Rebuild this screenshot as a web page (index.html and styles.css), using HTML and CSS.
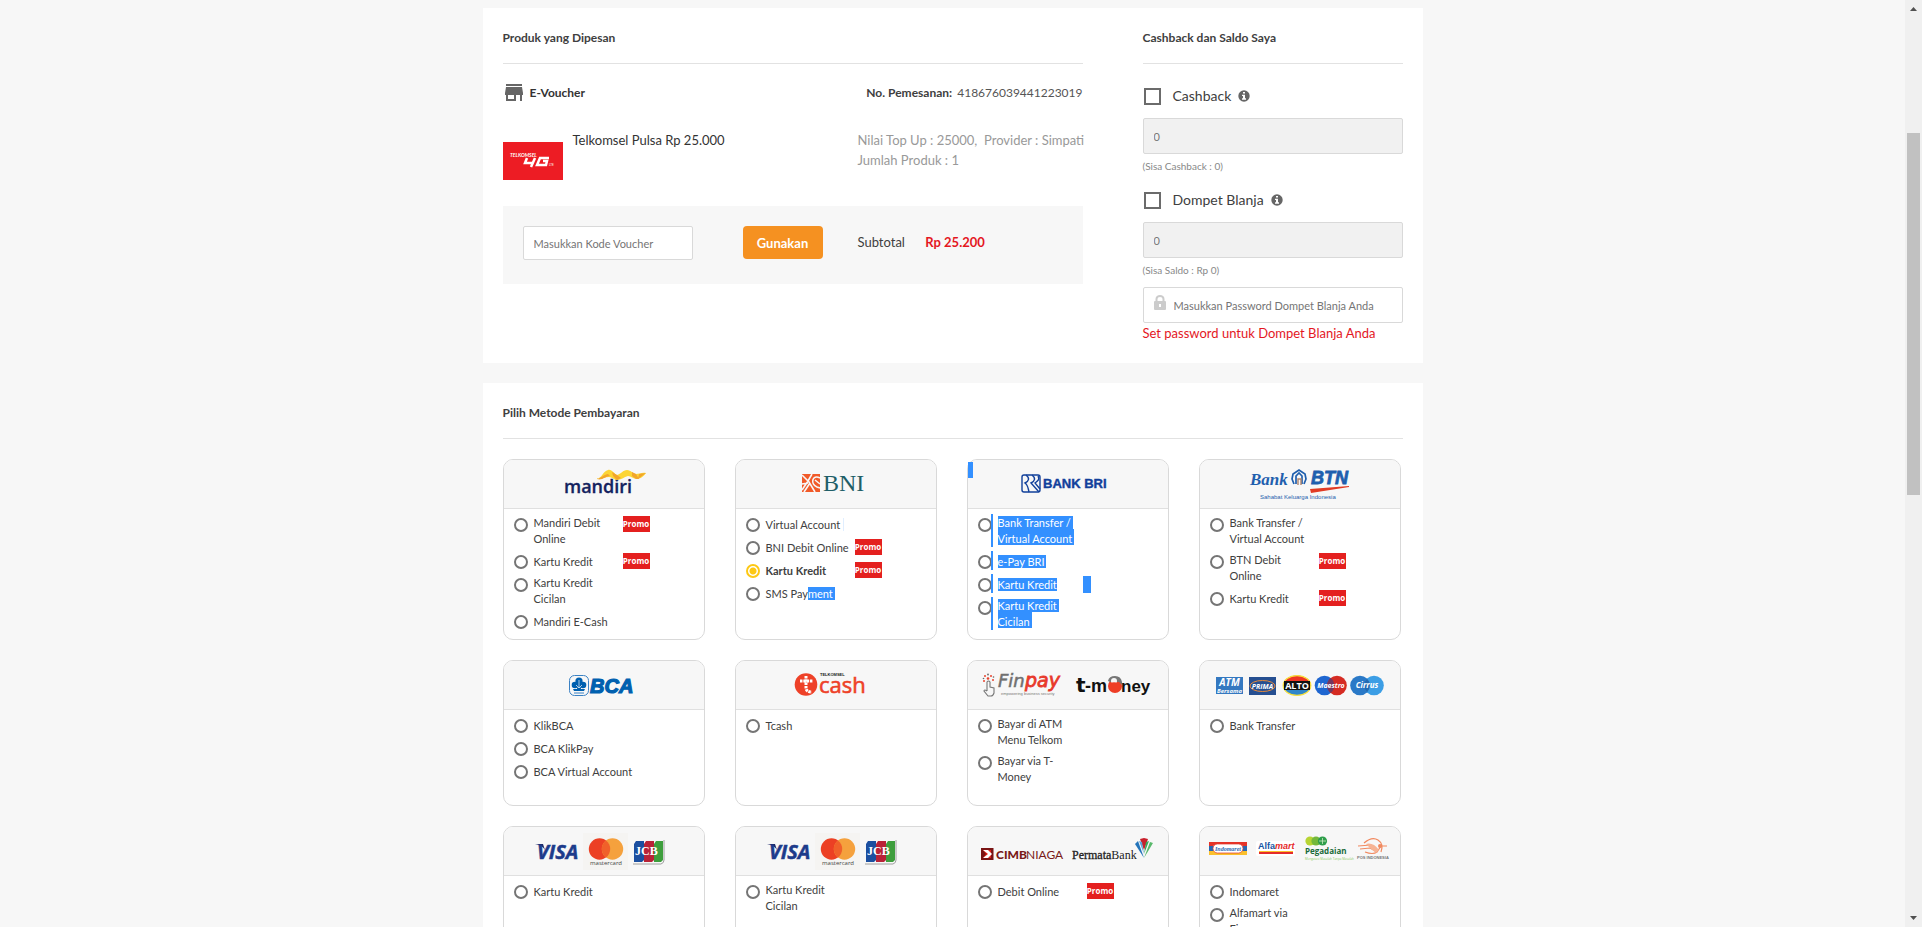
FILE: index.html
```html
<!DOCTYPE html>
<html lang="id">
<head>
<meta charset="utf-8">
<title>Pembayaran</title>
<link rel="stylesheet" href="styles.css">
</head>
<body>
<div class="viewport">
<main class="page">
  <section class="panel order">
    <div class="order-main">
      <h2 class="heading">Produk yang Dipesan</h2>
      <div class="order-head">
        <svg class="store" width="20" height="20" viewBox="0 0 20 20" aria-hidden="true"><path fill="#666" d="M2 1h16v2H2zM2 4h16l1 6v2h-1v6h-2v-6h-4v6H2v-6H1v-2zM4 12v4h6v-4z"/></svg>
        <strong>E-Voucher</strong>
        <p class="order-no"><strong>No. Pemesanan:</strong> <span>418676039441223019</span></p>
      </div>
      <div class="product">
        <svg class="product-pic" width="60" height="38" viewBox="0 0 60 38"><rect width="60" height="38" fill="#ed1c24"/><text x="7" y="15" font-size="5" font-weight="bold" font-style="italic" fill="#fff">TELKOMSEL</text><path d="M24 16l-2 5h8M32 16l-4 9M46 16H37l-3 7h9l1-4h-4" fill="none" stroke="#fff" stroke-width="2.500"/><text x="46" y="24" font-size="3" fill="#fff">LTE</text></svg>
        <p class="product-name">Telkomsel Pulsa Rp 25.000</p>
        <p class="product-meta">Nilai Top Up : 25000,&nbsp; Provider : Simpati<br>Jumlah Produk : 1</p>
      </div>
      <form class="voucher">
        <input class="field voucher-code" type="text" placeholder="Masukkan Kode Voucher" aria-label="Kode voucher">
        <button class="apply" type="button">Gunakan</button>
        <p class="subtotal">Subtotal <strong>Rp 25.200</strong></p>
      </form>
    </div>
    <div class="wallet">
      <h2 class="heading">Cashback dan Saldo Saya</h2>
      <div class="check"><input type="checkbox" id="cashback"><label for="cashback">Cashback</label>
        <svg width="12" height="12" viewBox="0 0 12 12" aria-hidden="true"><circle cx="6" cy="6" r="5.700" fill="#666"/><path fill="#fff" d="M5 2h2v1.600H5zM4 4.700h3v3.600h1v1.500H4V8.300h1V6.100H4z"/></svg></div>
      <input class="field wide" type="text" value="0" disabled aria-label="Jumlah cashback">
      <p class="note">(Sisa Cashback : 0)</p>
      <div class="check second"><input type="checkbox" id="dompet"><label for="dompet">Dompet Blanja</label>
        <svg width="12" height="12" viewBox="0 0 12 12" aria-hidden="true"><circle cx="6" cy="6" r="5.700" fill="#666"/><path fill="#fff" d="M5 2h2v1.600H5zM4 4.700h3v3.600h1v1.500H4V8.300h1V6.100H4z"/></svg></div>
      <input class="field wide" type="text" value="0" disabled aria-label="Jumlah saldo">
      <p class="note">(Sisa Saldo : Rp 0)</p>
      <div class="password">
        <svg width="12" height="15" viewBox="0 0 12 15" aria-hidden="true"><path d="M2.500 7V4a3.500 3 0 0 1 7 0v3" fill="none" stroke="#ccc" stroke-width="2"/><rect y="6" width="12" height="9" rx="1" fill="#ccc"/><path d="M5 9h2v3H5z" fill="#fff"/></svg>
        <input type="password" placeholder="Masukkan Password Dompet Blanja Anda" aria-label="Password Dompet Blanja">
      </div>
      <a class="set-link" href="#">Set password untuk Dompet Blanja Anda</a>
    </div>
  </section>

  <section class="panel">
    <h2 class="heading">Pilih Metode Pembayaran</h2>
    <div class="methods">

      <article class="method">
        <header><svg class="logo" width="200" height="48" viewBox="0 0 200 48">
          <text x="60" y="33" font-family="Open Sans" font-size="18" font-weight="600" fill="#14235f" stroke="#14235f" stroke-width=".3">mandiri</text>
          <path d="M93 19c5-1 6-8 11-9 4-1 6 4 9 5 4-1 6-5 10-5s6 4 9 4 6-2 10-1c-2 3-6 6-9 6-4 0-6-3-9-3-4 1-7 4-11 4-3 0-5-3-8-3-5 0-8 3-12 1z" fill="#fcd535"/>
          <path d="M93 19c4-1 8-5 11-5l2 2c-4 0-8 5-13 3zM108 12l5 3 4 3-4 2-4-4zM128 12l4 2 3 5-3 0-4-3zM135 14l7-1-8 6z" fill="#f2a52c"/>
        </svg></header>
        <ul>
          <li><input type="radio" name="pay" id="m1"><label for="m1">Mandiri Debit<br>Online</label><span class="promo">Promo</span></li>
          <li class="one"><input type="radio" name="pay" id="m2"><label for="m2">Kartu Kredit</label><span class="promo">Promo</span></li>
          <li><input type="radio" name="pay" id="m3"><label for="m3">Kartu Kredit<br>Cicilan</label></li>
          <li class="one"><input type="radio" name="pay" id="m4"><label for="m4">Mandiri E-Cash</label></li>
        </ul>
      </article>

      <article class="method">
        <header><svg class="logo" width="200" height="48" viewBox="0 0 200 48">
          <rect x="66" y="14" width="18" height="18" fill="#f15a29"/>
          <path d="M66 15l7 7 6 10M66 30l6-9 4-7M84 18c-8-4-10 6-3 9l3 1M79 20l5 4M74 23l-6 9M66 24l6-1" fill="none" stroke="#f7f7f7" stroke-width="1.600"/>
          <text x="87" y="31" font-family="Liberation Serif" font-size="24" fill="#1f5f68">BNI</text>
        </svg></header>
        <ul>
          <li class="one"><input type="radio" name="pay" id="n1"><label for="n1"><span class="edge">Virtual Account</span></label></li>
          <li class="one"><input type="radio" name="pay" id="n2"><label for="n2">BNI Debit Online</label><span class="promo">Promo</span></li>
          <li class="one"><input type="radio" name="pay" id="n3" checked><label for="n3">Kartu Kredit</label><span class="promo">Promo</span></li>
          <li class="one"><input type="radio" name="pay" id="n4"><label for="n4">SMS Pay<span class="sel">ment</span></label></li>
        </ul>
      </article>

      <article class="method marked">
        <header><svg class="logo" width="200" height="48" viewBox="0 0 200 48">
          <g fill="none" stroke="#12409b" stroke-width="1.400"><rect x="54" y="15" width="18" height="17" rx="2"/><path d="M58 15c4 3 3 6-1 8 3 2 3 5 4 9M64 15c4 3 3 6-1 8l8 9M70 16c2 3 0 5-3 7l5 6"/></g>
          <text x="75" y="28" font-family="Liberation Sans" font-size="13" font-weight="bold" fill="#12409b" stroke="#12409b" stroke-width=".4">BANK BRI</text>
        </svg></header>
        <ul>
          <li><input type="radio" name="pay" id="r1"><label for="r1"><span class="sel">Bank Transfer /</span><br><span class="sel next">Virtual Account</span></label></li>
          <li class="one"><input type="radio" name="pay" id="r2"><label for="r2"><span class="sel">e-Pay BRI</span></label></li>
          <li class="one"><input type="radio" name="pay" id="r3"><label for="r3"><span class="sel flush">Kartu Kredit</span></label><span class="sel-block"></span></li>
          <li><input type="radio" name="pay" id="r4"><label for="r4"><span class="sel">Kartu Kredit</span><br><span class="sel next">Cicilan</span></label></li>
        </ul>
      </article>

      <article class="method">
        <header><svg class="logo" width="200" height="48" viewBox="0 0 200 48">
          <text x="50" y="25" font-family="Liberation Serif" font-size="17" font-weight="bold" font-style="italic" fill="#1f5fae">Bank</text>
          <path d="M94 24l-2-5 1-5 6-4 6 4 1 5-2 5M96 24v-8l3-3 3 3v8" fill="none" stroke="#1f5fae" stroke-width="1.700"/><path d="M98 25v-6h3v6" fill="none" stroke="#b0846a" stroke-width="1.400"/>
          <text x="111" y="24" font-family="Liberation Sans" font-size="18" font-weight="bold" font-style="italic" fill="#1f5fae" stroke="#1f5fae" stroke-width=".8">BTN</text>
          <path d="M110 29l39-3v1l-38 6z" fill="#e23b24"/>
          <text x="60" y="39" font-family="Liberation Sans" font-size="6" fill="#1f5fae">Sahabat Keluarga Indonesia</text>
        </svg></header>
        <ul>
          <li><input type="radio" name="pay" id="t1"><label for="t1">Bank Transfer /<br>Virtual Account</label></li>
          <li><input type="radio" name="pay" id="t2"><label for="t2">BTN Debit<br>Online</label><span class="promo">Promo</span></li>
          <li class="one"><input type="radio" name="pay" id="t3"><label for="t3">Kartu Kredit</label><span class="promo">Promo</span></li>
        </ul>
      </article>

      <article class="method">
        <header><svg class="logo" width="200" height="48" viewBox="0 0 200 48">
          <rect x="65.500" y="14.500" width="19" height="20" rx="5" fill="none" stroke="#3b82c4"/>
          <g fill="#0060af"><circle cx="75" cy="20" r="3.600"/><circle cx="71" cy="24" r="3.300"/><circle cx="79" cy="24" r="3.300"/><path d="M74 22h2l1 6h4l-1 2H70l-1-2h4z"/></g>
          <path d="M75 19v8M72 24l3 3 3-3" stroke="#f7f7f7" stroke-width=".7" fill="none"/><path d="M70 32h10" stroke="#3b82c4"/>
          <text x="86" y="32" font-family="Liberation Sans" font-size="20" font-weight="bold" font-style="italic" fill="#0060af" stroke="#0060af" stroke-width="1.200">BCA</text>
        </svg></header>
        <ul>
          <li class="one"><input type="radio" name="pay" id="c1"><label for="c1">KlikBCA</label></li>
          <li class="one"><input type="radio" name="pay" id="c2"><label for="c2">BCA KlikPay</label></li>
          <li class="one"><input type="radio" name="pay" id="c3"><label for="c3">BCA Virtual Account</label></li>
        </ul>
      </article>

      <article class="method">
        <header><svg class="logo" width="200" height="48" viewBox="0 0 200 48">
          <circle cx="70" cy="23.500" r="11.300" fill="#ee4128"/>
          <path d="M70 15v12q0 4 6 4M64 20h13" fill="none" stroke="#fff" stroke-width="3" stroke-dasharray="2.500 .8"/>
          <text x="83" y="32" font-family="Open Sans" font-size="22" font-weight="500" fill="#ee4128" stroke="#ee4128" stroke-width=".6">cash</text>
          <text x="84" y="15" font-family="Liberation Sans" font-size="4" font-weight="bold" fill="#222">TELKOMSEL</text>
        </svg></header>
        <ul><li class="one"><input type="radio" name="pay" id="k1"><label for="k1">Tcash</label></li></ul>
      </article>

      <article class="method">
        <header><svg class="logo" width="200" height="48" viewBox="0 0 200 48">
          <g fill="none" stroke="#777" stroke-width="1.100"><path d="M19 30v-9q1.500-2 3 0v5l4 1v5q-1 3-3 3h-3l-4-5q0-2 3 0"/></g>
          <g fill="#e8432e"><circle cx="20" cy="17.500" r="1.300"/><circle cx="17" cy="15" r="1"/><circle cx="23" cy="15" r="1"/><circle cx="25" cy="19" r="1"/><circle cx="16" cy="20" r="1"/></g><g fill="#666"><circle cx="20" cy="13.500" r=".9"/><circle cx="25.500" cy="16" r=".8"/><circle cx="15.500" cy="17.500" r=".8"/></g>
          <text x="30" y="26" font-family="DejaVu Sans" font-size="18" font-style="italic" fill="#707070" stroke="#707070" stroke-width=".5">Fin</text><text x="57" y="26" font-family="DejaVu Sans" font-size="19" font-style="italic" fill="#e8392b" stroke="#e8392b" stroke-width=".8">pay</text>
          <text x="33" y="34" font-family="Liberation Sans" font-size="4" fill="#777">empowering business security</text>
          <text x="108" y="31" font-family="DejaVu Sans" font-size="20" font-weight="bold" fill="#111">t</text>
          <text x="117" y="31" font-family="Liberation Sans" font-size="18" font-weight="bold" fill="#111">-m</text>
          <circle cx="147" cy="25" r="7" fill="#ee3e26"/><path d="M140 20q1-5 7-5t7 6v3l-3-3h-9z" fill="#777"/>
          <circle cx="146" cy="20" r="3" fill="#f7f7f7"/><path d="M142 22q4-1.500 8 0v3h-8z" fill="#ee3e26"/>
          <text x="153" y="31" font-family="Liberation Sans" font-size="17" font-weight="bold" fill="#111">ney</text>
        </svg></header>
        <ul>
          <li><input type="radio" name="pay" id="f1"><label for="f1">Bayar di ATM<br>Menu Telkom</label></li>
          <li><input type="radio" name="pay" id="f2"><label for="f2">Bayar via T-<br>Money</label></li>
        </ul>
      </article>

      <article class="method">
        <header><svg class="logo" width="200" height="48" viewBox="0 0 200 48" font-family="Open Sans" font-weight="bold" font-style="italic" fill="#fff" text-anchor="middle">
          <rect x="16" y="16" width="27" height="17" fill="#3478c0"/><text x="29.500" y="25" font-size="10">ATM</text><text x="29.500" y="32" font-size="6">Bersama</text>
          <rect x="49" y="16" width="27" height="18" fill="#264f91"/><ellipse cx="62.500" cy="25" rx="12.500" ry="5.500" fill="none" stroke="#e98b3a"/><text x="62.500" y="28" font-size="7">PRIMA</text>
          <ellipse cx="97" cy="24.500" rx="14" ry="10" fill="#2f86ca"/><path d="M83 24.500a14 10 0 0 1 28 0z" fill="#ee3524"/><ellipse cx="97" cy="24.500" rx="13.800" ry="9.800" fill="none" stroke="#fbe13a" stroke-width="1.200"/><rect x="84" y="20" width="26" height="9" fill="#111"/><text x="97" y="28" font-size="9" font-style="normal">ALTO</text>
          <circle cx="124.500" cy="24.500" r="9.800" fill="#1f66d0"/><circle cx="137" cy="24.500" r="9.800" fill="#d52b22"/><path d="M130.700 17a9.800 9.800 0 0 1 0 15 9.800 9.800 0 0 1 0-15" fill="#73375f"/><text x="131" y="27" font-size="7">Maestro</text>
          <circle cx="160" cy="24.500" r="9.800" fill="#2a79c7"/><circle cx="174" cy="24.500" r="9.800" fill="#3c9ee5"/><path d="M167 17.600a9.800 9.800 0 0 1 0 13.800 9.800 9.800 0 0 1 0-13.800" fill="#2569b0"/><text x="167" y="27" font-size="8">Cirrus</text>
        </svg></header>
        <ul><li class="one"><input type="radio" name="pay" id="a1"><label for="a1">Bank Transfer</label></li></ul>
      </article>

      <article class="method">
        <header><svg class="logo" width="200" height="48" viewBox="0 0 200 48">
          <path d="M31 17h8l2 6q-3-5-10-6z" fill="#1f2a6b"/><text x="33" y="32" font-family="Open Sans" font-size="20" font-weight="bold" font-style="italic" fill="#1d3b8b" stroke="#1d3b8b" stroke-width=".5">VISA</text>
          <rect x="79" y="6" width="45" height="37" fill="#f5f4f2"/><circle cx="95.500" cy="22" r="10.700" fill="#ec4024"/><circle cx="108.500" cy="22" r="10.700" fill="#f5a13d"/><path d="M102 13.500a10.700 10.700 0 0 1 0 17 10.700 10.700 0 0 1 0-17" fill="#f0602a"/><text x="86" y="38" font-family="Open Sans" font-size="6" fill="#444">mastercard</text>
          <path d="M132 14h8v19l-2 2h-8V17z" fill="#1c4fa0"/><path d="M142 14h8v19l-2 2h-8V17z" fill="#b92237"/><path d="M152 14h7v19l-2 2h-7V17z" fill="#3e9e3d"/><path d="M129 37h28q3-1 3-4V13" fill="none" stroke="#888" stroke-width=".8"/><text x="131" y="28" font-family="Liberation Serif" font-size="12" font-weight="bold" fill="#fff">JCB</text>
        </svg></header>
        <ul><li class="one"><input type="radio" name="pay" id="v1"><label for="v1">Kartu Kredit</label></li></ul>
      </article>

      <article class="method">
        <header><svg class="logo" width="200" height="48" viewBox="0 0 200 48">
          <path d="M31 17h8l2 6q-3-5-10-6z" fill="#1f2a6b"/><text x="33" y="32" font-family="Open Sans" font-size="20" font-weight="bold" font-style="italic" fill="#1d3b8b" stroke="#1d3b8b" stroke-width=".5">VISA</text>
          <rect x="79" y="6" width="45" height="37" fill="#f5f4f2"/><circle cx="95.500" cy="22" r="10.700" fill="#ec4024"/><circle cx="108.500" cy="22" r="10.700" fill="#f5a13d"/><path d="M102 13.500a10.700 10.700 0 0 1 0 17 10.700 10.700 0 0 1 0-17" fill="#f0602a"/><text x="86" y="38" font-family="Open Sans" font-size="6" fill="#444">mastercard</text>
          <path d="M132 14h8v19l-2 2h-8V17z" fill="#1c4fa0"/><path d="M142 14h8v19l-2 2h-8V17z" fill="#b92237"/><path d="M152 14h7v19l-2 2h-7V17z" fill="#3e9e3d"/><path d="M129 37h28q3-1 3-4V13" fill="none" stroke="#888" stroke-width=".8"/><text x="131" y="28" font-family="Liberation Serif" font-size="12" font-weight="bold" fill="#fff">JCB</text>
        </svg></header>
        <ul><li><input type="radio" name="pay" id="w1"><label for="w1">Kartu Kredit<br>Cicilan</label></li></ul>
      </article>

      <article class="method">
        <header><svg class="logo" width="200" height="48" viewBox="0 0 200 48">
          <rect x="13" y="21" width="12.500" height="12" fill="#7a1414"/><path d="M15 23h8v8h-8l3-4z" fill="#e2231a"/><path d="M15 23h5l4 4-4 4h-5l5-4z" fill="#fff"/>
          <text x="28" y="32" font-family="Lato" font-size="12" font-weight="900" fill="#7a1a18">CIMB</text><text x="58" y="32" font-family="Lato" font-size="12" fill="#7a1a18">NIAGA</text>
          <text x="104" y="32" font-family="Liberation Serif" font-size="12" fill="#222"><tspan stroke="#222" stroke-width=".3">Permata</tspan>Bank</text>
          <path d="M172 12l4-1 4 1-4 11z" fill="#c8202c"/><path d="M167 17l3-3 6 17z" fill="#2374ba"/><path d="M171 14l3 1 2 12z" fill="#5fa6da"/><path d="M181 14l-3 1-2 12z" fill="#3aa559"/><path d="M185 16l-3-1-6 16z" fill="#59b96b"/>
        </svg></header>
        <ul><li class="one"><input type="radio" name="pay" id="p1"><label for="p1">Debit Online</label><span class="promo">Promo</span></li></ul>
      </article>

      <article class="method">
        <header><svg class="logo" width="200" height="48" viewBox="0 0 200 48">
          <rect x="9" y="15" width="38" height="4" fill="#e53327"/><rect x="9" y="19" width="38" height="5" fill="#2768b2"/><rect x="9" y="24" width="38" height="4" fill="#fbc02d"/><rect x="13" y="17" width="30" height="9" rx="4.500" fill="#fff" stroke="#e53327" stroke-width=".7"/><text x="28" y="24" text-anchor="middle" font-family="Liberation Serif" font-size="6" font-weight="bold" font-style="italic" fill="#2768b2">Indomaret</text>
          <rect x="56" y="14" width="39" height="15" rx="2" fill="#fff"/><text x="58" y="22" font-family="Liberation Sans" font-size="9" font-weight="bold" fill="#1555a5">Alfa<tspan fill="#e52b2b" font-style="italic">mart</tspan></text><path d="M59 24h34v1H59z" fill="#fbc02d"/><path d="M59 25h34v2H59z" fill="#e52b2b"/>
          <circle cx="110" cy="14" r="4.600" fill="#b7d433"/><circle cx="116" cy="14" r="4.600" fill="#74b83b"/><circle cx="122.500" cy="14" r="4.600" fill="#2e9e4b"/><path d="M119 14h7M122.500 11v6" stroke="#cde8c0" stroke-width=".8"/>
          <text x="105" y="27" font-family="Open Sans" font-size="8" font-weight="bold" fill="#176b3a">Pegadaian</text><text x="105" y="33" font-family="Open Sans" font-size="3" fill="#8ccc62">Mengatasi Masalah Tanpa Masalah</text>
          <g fill="none" stroke="#f1895f" stroke-width="1.200"><path d="M164 16q8-7 14-3t3 12M165 25q8 3 12 0l4-6h6M158 19l13-1 6 6M160 22l10-1 7 4"/></g><path d="M166 17q7-2 13 6l-3 3-6-5z" fill="#f6b394"/><circle cx="180" cy="19" r="2" fill="#f1895f"/>
          <text x="157" y="32" font-family="Liberation Sans" font-size="4" font-weight="bold" fill="#777">POS INDONESIA</text>
        </svg></header>
        <ul>
          <li class="one"><input type="radio" name="pay" id="i1"><label for="i1">Indomaret</label></li>
          <li><input type="radio" name="pay" id="i2"><label for="i2">Alfamart via<br>Finpay</label></li>
        </ul>
      </article>
    </div>
  </section>
</main>
<div class="scrollbar" aria-hidden="true">
  <svg width="7" height="4" viewBox="0 0 7 4"><path d="M0 4l3.500-4L7 4z" fill="#505050"/></svg>
  <div class="track"><div class="thumb"></div></div>
  <svg width="7" height="4" viewBox="0 0 7 4"><path d="M0 0l3.500 4L7 0z" fill="#505050"/></svg>
</div>
</div>
</body>
</html>
```

FILE: styles.css
```css
* { box-sizing: border-box; }
body { margin: 0; background: #f7f7f7; color: #404040; font-family: Lato, "Open Sans", sans-serif; font-size: 13px; line-height: 20px; }
p, ul, h2 { margin: 0; padding: 0; }
ul { list-style: none; }
svg { flex: none; display: block; }
input, button { font-family: inherit; }

.viewport { display: flex; height: 100vh; overflow: hidden; }
.page { flex: 1; padding: 8px 16px 0; overflow: hidden; }
.panel { max-width: 940px; margin: 0 auto 20px; padding: 20px; background: #fff; }
.heading { padding-bottom: 15px; border-bottom: 1px solid #e2e2e2; font-size: 12px; line-height: 20px; font-weight: 700; }

/* Order summary */
.order { display: grid; grid-template-columns: minmax(0, 1fr) 260px; gap: 60px; }
.order-head { display: flex; align-items: center; gap: 6px; margin-top: 19px; font-size: 12px; color: #333; }
.store { margin-left: 1px; }
.order-no { margin-left: auto; color: #555; }
.order-no strong { color: #404040; margin-right: 2px; }
.order-no span { font-size: 12px; }
.product { display: grid; grid-template-columns: 60px 1fr 225px; column-gap: 10px; margin-top: 27px; }
.product-pic { margin-top: 12px; }
.product-name { color: #333; }
.product-meta { color: #999; white-space: nowrap; }
.voucher { display: flex; align-items: flex-start; margin-top: 26px; padding: 20px 20px 24px; background: #f7f7f7; }
.field { height: 34px; padding: 0 10px; border: 1px solid #d9d9d9; border-radius: 2px; background: #fff; color: #777; font-size: 11px; }
.field::placeholder, .password input::placeholder { color: #757575; opacity: 1; }
.voucher-code { width: 170px; margin-right: 50px; }
.apply { width: 80px; height: 33px; margin-right: 35px; padding: 0; border: 0; border-radius: 4px; background: #f59121; color: #fff; font-size: 13px; font-weight: 700; }
.subtotal { line-height: 33px; }
.subtotal strong { margin-left: 17px; color: #e4171f; }

/* Wallet */
.check { display: flex; align-items: center; height: 20px; margin: 22px 0 12px; font-size: 14px; }
.check.second { margin-top: 18px; }
.check input { appearance: none; width: 17px; height: 17px; margin: 0 12px 0 1px; border: 2px solid #6b6b6b; background: #fff; }
.check label { margin-right: 7px; }
.wide { width: 100%; height: 36px; background: #f1f1f1; }
.note { margin-top: 6px; color: #888; font-size: 10px; line-height: 12px; }
.password { display: flex; height: 36px; margin-top: 11px; padding: 7px 10px; gap: 8px; border: 1px solid #d9d9d9; border-radius: 2px; }
.password input { flex: 1; min-width: 0; height: 20px; padding: 0; border: 0; outline: 0; background: none; font-size: 11px; }
.set-link { display: block; color: #e4171f; text-decoration: none; }

/* Payment methods */
.methods { display: grid; grid-template-columns: repeat(4, minmax(0, 1fr)); gap: 20px 30px; margin-top: 20px; padding-right: 2px; }
.method { position: relative; min-height: 146px; border: 1px solid #d9d9d9; border-radius: 10px; overflow: hidden; }
.method header { display: flex; justify-content: center; border-bottom: 1px solid #e0e0e0; background: #f7f7f7; }
.method ul { padding: 6px 10px 4px; font-size: 11px; line-height: 16px; }
.method li { position: relative; display: flex; align-items: flex-start; margin-bottom: 5px; }
.method li label { width: 82px; margin-left: 6px; white-space: nowrap; }
.method li.one label { padding-top: 2px; }
.method li input { appearance: none; flex: none; width: 14px; height: 14px; margin: 3px 0 0; border: 2px solid #757575; border-radius: 50%; background: #fff; }
.method li input:checked { border-color: #fdc814; background: radial-gradient(circle, #fdc814 3px, #fff 4px); }
.method li input:checked + label { font-weight: 700; }
.promo { display: flex; justify-content: center; width: 27px; height: 16px; margin: 1px 0 0 7px; overflow: hidden; background: #e4201f; color: #fff; font-family: "Open Sans", sans-serif; font-size: 8px; font-weight: 700; }

/* Text selection */
.sel { padding-right: 2px; background: #3390ff; color: #fff; }
.sel.next { padding-top: 3px; }
.sel.flush { padding-right: 0; }
.edge { padding-right: 3px; border-right: 1px solid #e0eeff; }
.sel-block { width: 8px; height: 17px; margin: 1px 0 0 3px; background: #3390ff; }
.marked { overflow: visible; }
.marked header { border-radius: 9px 9px 0 0; }
.marked::before { content: ""; position: absolute; top: 2px; left: 0; width: 5px; height: 16px; background: #3390ff; }
.marked li::before { content: ""; position: absolute; top: -1px; bottom: 0; left: 13px; width: 2px; background: #3390ff; }

/* Window scrollbar */
.scrollbar { display: flex; flex-direction: column; align-items: center; width: 17px; padding: 7px 2px; background: #f0f0f0; }
.track { flex: 1; width: 100%; padding-top: 122px; }
.thumb { height: 362px; background: #c1c1c1; }
```
